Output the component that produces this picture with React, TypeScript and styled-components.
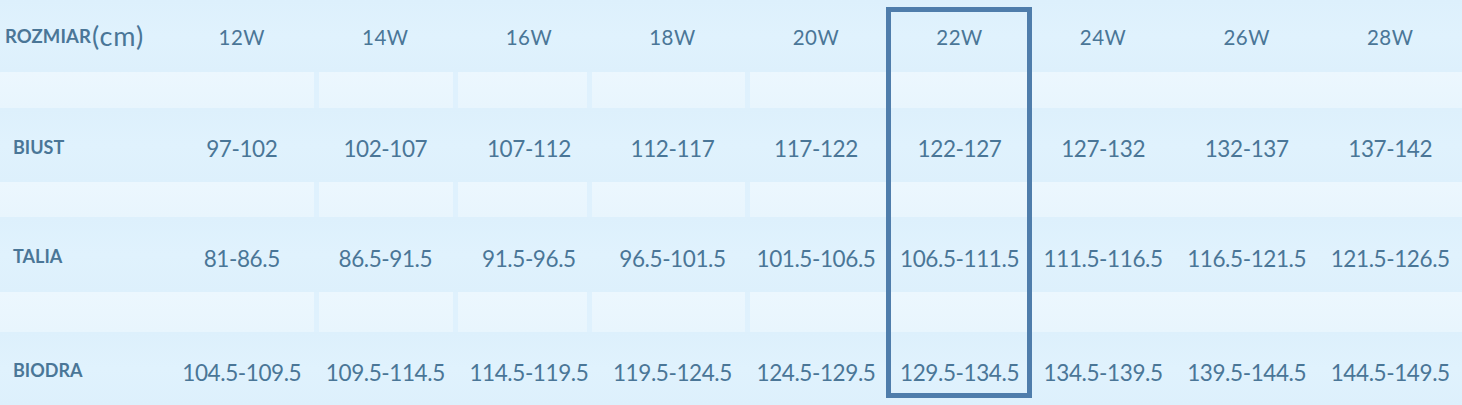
import React from 'react'
import styled, { createGlobalStyle } from 'styled-components'

const sizes = ['12W', '14W', '16W', '18W', '20W', '22W', '24W', '26W', '28W']

const measures = [
  { name: 'BIUST', values: ['97-102', '102-107', '107-112', '112-117', '117-122', '122-127', '127-132', '132-137', '137-142'], height: 74 },
  { name: 'TALIA', values: ['81-86.5', '86.5-91.5', '91.5-96.5', '96.5-101.5', '101.5-106.5', '106.5-111.5', '111.5-116.5', '116.5-121.5', '121.5-126.5'], height: 75 },
  { name: 'BIODRA', values: ['104.5-109.5', '109.5-114.5', '114.5-119.5', '119.5-124.5', '124.5-129.5', '129.5-134.5', '134.5-139.5', '139.5-144.5', '144.5-149.5'], height: 73 },
]

const spacerHeights = [36, 35, 40]
const spacerSegments = [314, 134, 129, 153]

const highlighted = 5

const App: React.FC = () => {
  return (
    <>
      <GlobalStyle />
      <Table>
        <Row $height={72}>
          <HeadLabel>
            ROZMIAR<Unit>(cm)</Unit>
          </HeadLabel>
          {sizes.map(size => (
            <SizeCell key={size}>{size}</SizeCell>
          ))}
        </Row>

        {measures.map((measure, i) => (
          <React.Fragment key={measure.name}>
            <Spacer $height={spacerHeights[i]}>
              {spacerSegments.map((w, j) => (
                <Segment key={j} $width={w} />
              ))}
              <Segment />
            </Spacer>
            <Row $height={measure.height}>
              <RowLabel>{measure.name}</RowLabel>
              {measure.values.map(value => (
                <ValueCell key={value}>{value}</ValueCell>
              ))}
            </Row>
          </React.Fragment>
        ))}

        <Highlight $column={highlighted} />
      </Table>
    </>
  )
}

export default App

const GlobalStyle = createGlobalStyle`
  html, body {
    margin: 0;
    padding: 0;
    background: #dff1fd;
  }
  body {
    font-family: Lato, "Open Sans", sans-serif;
  }
`

const Table = styled.div`
  position: relative;
  width: 1462px;
  height: 405px;
  overflow: hidden;
  background: #dff1fd;
`

const Row = styled.div<{ $height: number }>`
  display: grid;
  grid-template-columns: 170px repeat(9, 1fr);
  align-items: center;
  height: ${p => p.$height}px;
  background: linear-gradient(180deg, #ddf0fc 0%, #e0f2fd 50%, #ddf0fc 100%);
  color: #4a7697;
`

const HeadLabel = styled.div`
  padding-left: 5px;
  font-size: 18.5px;
  font-weight: 700;
  letter-spacing: 0.1px;
  white-space: nowrap;
  display: flex;
  align-items: center;
`

const Unit = styled.span`
  font-size: 27px;
  font-weight: 400;
  margin-left: 1px;
  letter-spacing: 1px;
  margin-top: -2px;
`

const SizeCell = styled.div`
  text-align: center;
  font-size: 20.5px;
  letter-spacing: 0.5px;
  padding-top: 2px;
`

const RowLabel = styled.div`
  padding-left: 13px;
  padding-top: 3px;
  font-size: 18px;
  font-weight: 700;
`

const ValueCell = styled.div`
  text-align: center;
  font-size: 22.5px;
  letter-spacing: -0.4px;
  padding-top: 7px;
  white-space: nowrap;
`

const Spacer = styled.div<{ $height: number }>`
  display: flex;
  gap: 5px;
  height: ${p => p.$height}px;
  background: #dff1fd;
`

const Segment = styled.div<{ $width?: number }>`
  ${p => (p.$width ? `width: ${p.$width}px;` : 'flex: 1;')}
  flex-shrink: 0;
  background: linear-gradient(180deg, #ecf7fe 0%, #e8f5fd 100%);
`

const Highlight = styled.div<{ $column: number }>`
  position: absolute;
  top: 7px;
  bottom: 7px;
  left: calc(170px + ${p => p.$column} * (100% - 170px) / 9 - 2px);
  width: calc((100% - 170px) / 9 + 3px);
  box-sizing: border-box;
  border: 5px solid #4f7dab;
  pointer-events: none;
`
